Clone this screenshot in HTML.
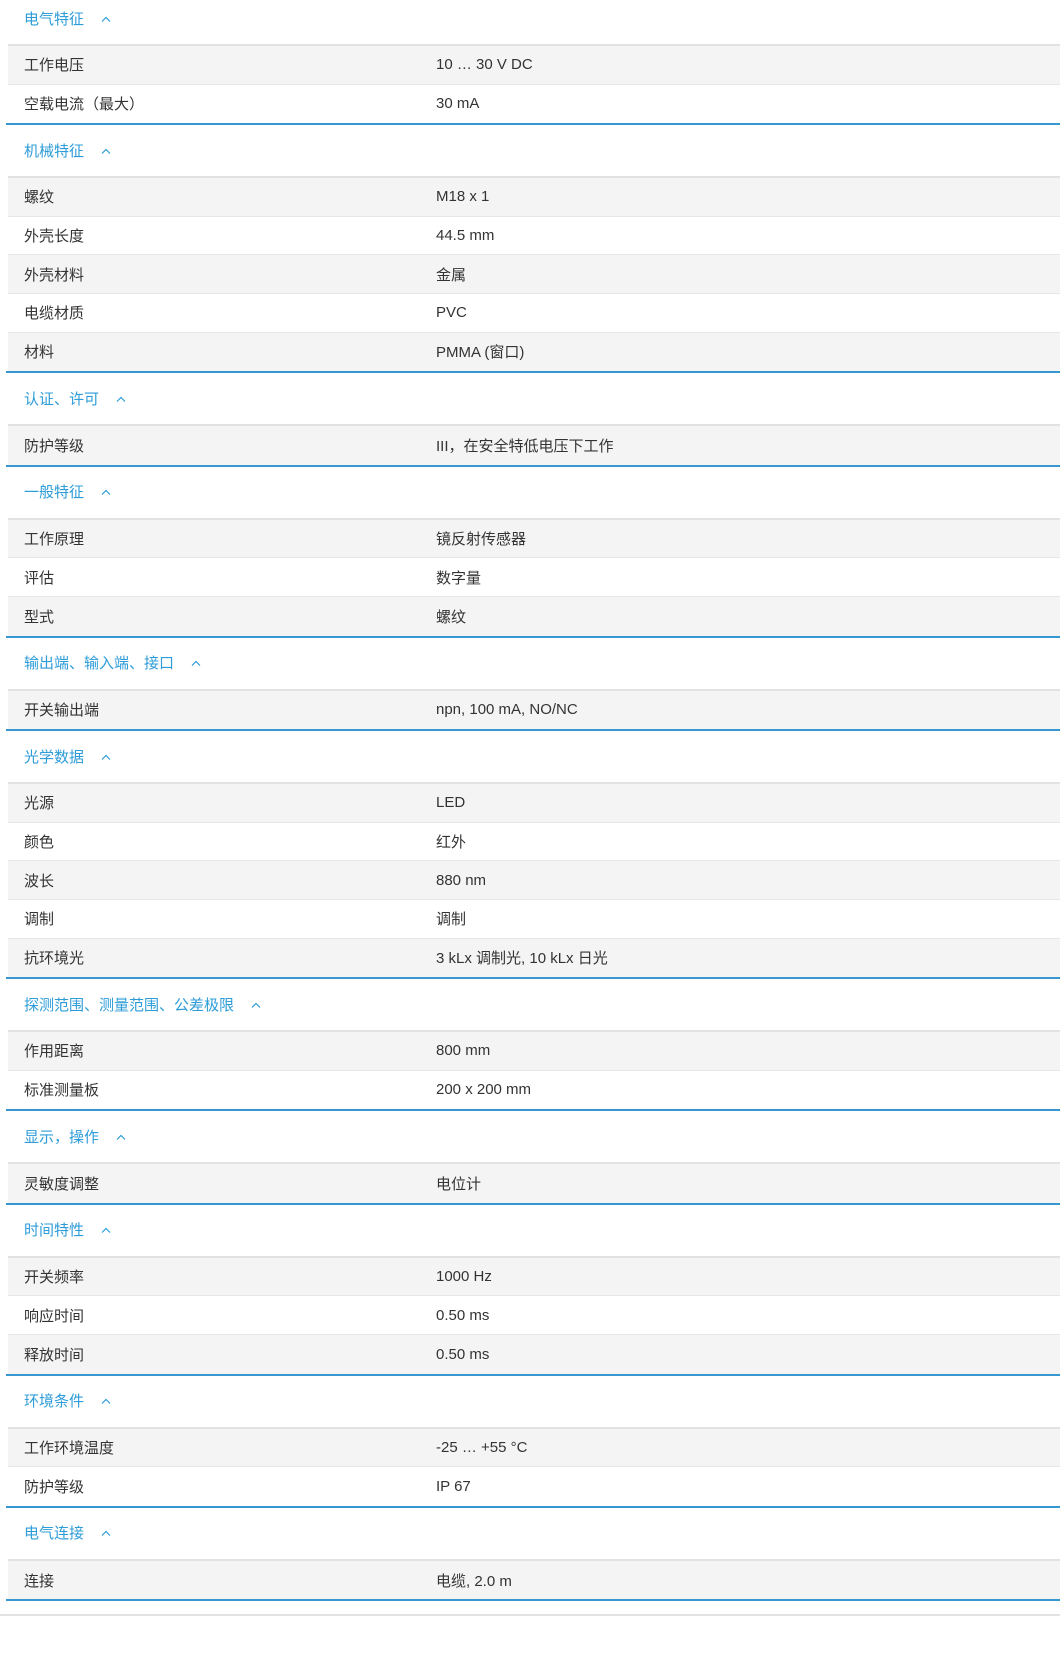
<!DOCTYPE html>
<html><head><meta charset="utf-8">
<style>
*{margin:0;padding:0;box-sizing:border-box}
body{width:1060px;height:1662px;background:#fff;font-family:"Liberation Sans","Noto Sans CJK SC",sans-serif;font-size:15px;color:#333;overflow:hidden}
.wrap{padding-left:8px}
.sec{border-bottom:2px solid #3598d1;margin-left:-2px;padding-left:2px}
.h{height:53px;padding-top:2px;padding-left:16px;color:#2d9cd8;font-size:15px;line-height:28px;display:flex;align-items:center;border-bottom:2px solid #e2e2e2}
.h.first{height:46px;padding-top:0;padding-bottom:4px}
.h svg{margin-left:17px;margin-top:-2px}
.r{height:38.6px;display:flex;align-items:center;border-bottom:1px solid #e6e6e6}
.sec .r:last-child{border-bottom:none}
.r:nth-child(even){background:#f4f4f4}
.r .k{width:428px;padding-left:16px}
.foot{height:15px;border-bottom:2px solid #e2e2e2}
</style></head><body>
<div class="wrap">
<div class="sec"><div class="h first">电气特征<svg width="10" height="6" viewBox="0 0 10 6"><polyline points="1,5.5 5,1.5 9,5.5" fill="none" stroke="#2d9cd8" stroke-width="1.2"/></svg></div>
<div class="r"><div class="k">工作电压</div><div>10 … 30 V DC</div></div>
<div class="r"><div class="k">空载电流（最大）</div><div>30 mA</div></div></div>

<div class="sec"><div class="h">机械特征<svg width="10" height="6" viewBox="0 0 10 6"><polyline points="1,5.5 5,1.5 9,5.5" fill="none" stroke="#2d9cd8" stroke-width="1.2"/></svg></div>
<div class="r"><div class="k">螺纹</div><div>M18 x 1</div></div>
<div class="r"><div class="k">外壳长度</div><div>44.5 mm</div></div>
<div class="r"><div class="k">外壳材料</div><div>金属</div></div>
<div class="r"><div class="k">电缆材质</div><div>PVC</div></div>
<div class="r"><div class="k">材料</div><div>PMMA (窗口)</div></div></div>

<div class="sec"><div class="h">认证、许可<svg width="10" height="6" viewBox="0 0 10 6"><polyline points="1,5.5 5,1.5 9,5.5" fill="none" stroke="#2d9cd8" stroke-width="1.2"/></svg></div>
<div class="r"><div class="k">防护等级</div><div>III，在安全特低电压下工作</div></div></div>

<div class="sec"><div class="h">一般特征<svg width="10" height="6" viewBox="0 0 10 6"><polyline points="1,5.5 5,1.5 9,5.5" fill="none" stroke="#2d9cd8" stroke-width="1.2"/></svg></div>
<div class="r"><div class="k">工作原理</div><div>镜反射传感器</div></div>
<div class="r"><div class="k">评估</div><div>数字量</div></div>
<div class="r"><div class="k">型式</div><div>螺纹</div></div></div>

<div class="sec"><div class="h">输出端、输入端、接口<svg width="10" height="6" viewBox="0 0 10 6"><polyline points="1,5.5 5,1.5 9,5.5" fill="none" stroke="#2d9cd8" stroke-width="1.2"/></svg></div>
<div class="r"><div class="k">开关输出端</div><div>npn, 100 mA, NO/NC</div></div></div>

<div class="sec"><div class="h">光学数据<svg width="10" height="6" viewBox="0 0 10 6"><polyline points="1,5.5 5,1.5 9,5.5" fill="none" stroke="#2d9cd8" stroke-width="1.2"/></svg></div>
<div class="r"><div class="k">光源</div><div>LED</div></div>
<div class="r"><div class="k">颜色</div><div>红外</div></div>
<div class="r"><div class="k">波长</div><div>880 nm</div></div>
<div class="r"><div class="k">调制</div><div>调制</div></div>
<div class="r"><div class="k">抗环境光</div><div>3 kLx 调制光, 10 kLx 日光</div></div></div>

<div class="sec"><div class="h">探测范围、测量范围、公差极限<svg width="10" height="6" viewBox="0 0 10 6"><polyline points="1,5.5 5,1.5 9,5.5" fill="none" stroke="#2d9cd8" stroke-width="1.2"/></svg></div>
<div class="r"><div class="k">作用距离</div><div>800 mm</div></div>
<div class="r"><div class="k">标准测量板</div><div>200 x 200 mm</div></div></div>

<div class="sec"><div class="h">显示，操作<svg width="10" height="6" viewBox="0 0 10 6"><polyline points="1,5.5 5,1.5 9,5.5" fill="none" stroke="#2d9cd8" stroke-width="1.2"/></svg></div>
<div class="r"><div class="k">灵敏度调整</div><div>电位计</div></div></div>

<div class="sec"><div class="h">时间特性<svg width="10" height="6" viewBox="0 0 10 6"><polyline points="1,5.5 5,1.5 9,5.5" fill="none" stroke="#2d9cd8" stroke-width="1.2"/></svg></div>
<div class="r"><div class="k">开关频率</div><div>1000 Hz</div></div>
<div class="r"><div class="k">响应时间</div><div>0.50 ms</div></div>
<div class="r"><div class="k">释放时间</div><div>0.50 ms</div></div></div>

<div class="sec"><div class="h">环境条件<svg width="10" height="6" viewBox="0 0 10 6"><polyline points="1,5.5 5,1.5 9,5.5" fill="none" stroke="#2d9cd8" stroke-width="1.2"/></svg></div>
<div class="r"><div class="k">工作环境温度</div><div>-25 … +55 °C</div></div>
<div class="r"><div class="k">防护等级</div><div>IP 67</div></div></div>

<div class="sec"><div class="h">电气连接<svg width="10" height="6" viewBox="0 0 10 6"><polyline points="1,5.5 5,1.5 9,5.5" fill="none" stroke="#2d9cd8" stroke-width="1.2"/></svg></div>
<div class="r"><div class="k">连接</div><div>电缆, 2.0 m</div></div></div>
</div>
<div class="foot"></div>
</body></html>
